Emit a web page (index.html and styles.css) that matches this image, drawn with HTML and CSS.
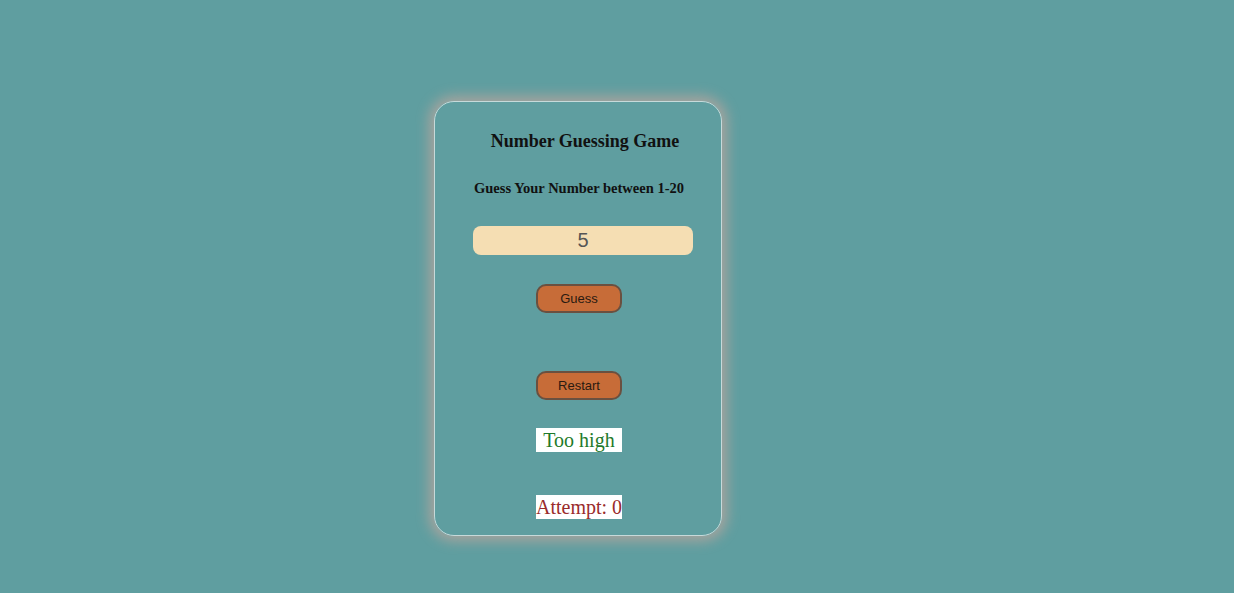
FILE: index.html
```html
<!DOCTYPE html>
<html>
<head>
<meta charset="utf-8">
<link rel="stylesheet" href="styles.css">
</head>
<body>
<div class="card">
  <h2 class="title">Number Guessing Game</h2>
  <h3 class="subtitle">Guess Your Number between 1-20</h3>
  <input class="guess-input" type="text" value="5">
  <button class="btn btn-guess">Guess</button>
  <button class="btn btn-restart">Restart</button>
  <div class="result too-high">Too high</div>
  <div class="result attempts">Attempt: 0</div>
</div>
</body>
</html>
```
FILE: styles.css
```css
html, body {
  margin: 0;
  padding: 0;
}
body {
  background: #5f9ea0;
  font-family: "Liberation Serif", "Times New Roman", serif;
  height: 593px;
  padding-top: 101px;
  padding-left: 434px;
  box-sizing: border-box;
}
.card {
  width: 284px;
  border: 1px solid #c6dada;
  border-radius: 20px;
  box-shadow: 0 0 13px 5px #a8a49e;
  display: flex;
  flex-direction: column;
  align-items: center;
  padding-top: 28px;
  padding-left: 2px;
  box-sizing: content-box;
  height: 405px;
}
.title {
  margin: 0;
  font-size: 18px;
  line-height: 22px;
  font-weight: bold;
  color: #111;
  padding-left: 12px;
}
.subtitle {
  margin: 26px 0 0;
  font-size: 14.5px;
  line-height: 20px;
  font-weight: bold;
  color: #111;
}
.guess-input {
  margin-top: 28px;
  margin-left: 8px;
  width: 220px;
  height: 29px;
  box-sizing: border-box;
  border: none;
  border-radius: 8px;
  background: #f5deb3;
  text-align: center;
  font-family: "Liberation Sans", Arial, sans-serif;
  font-size: 20px;
  color: #555;
  outline: none;
  padding: 0;
}
.btn {
  width: 86px;
  height: 29px;
  box-sizing: border-box;
  border: 2px solid #6a5040;
  border-radius: 10px;
  background: #c76c38;
  font-family: "Liberation Sans", Arial, sans-serif;
  font-size: 13px;
  color: #2a1a10;
  padding: 0;
}
.btn-guess {
  margin-top: 29px;
}
.btn-restart {
  margin-top: 58px;
}
.result {
  width: 86px;
  height: 24px;
  line-height: 24px;
  background: #ffffff;
  text-align: center;
  font-size: 20px;
  white-space: nowrap;
}
.too-high {
  margin-top: 28px;
  color: #1f7a2a;
}
.attempts {
  margin-top: 43px;
  color: #9a2b2b;
}
```
